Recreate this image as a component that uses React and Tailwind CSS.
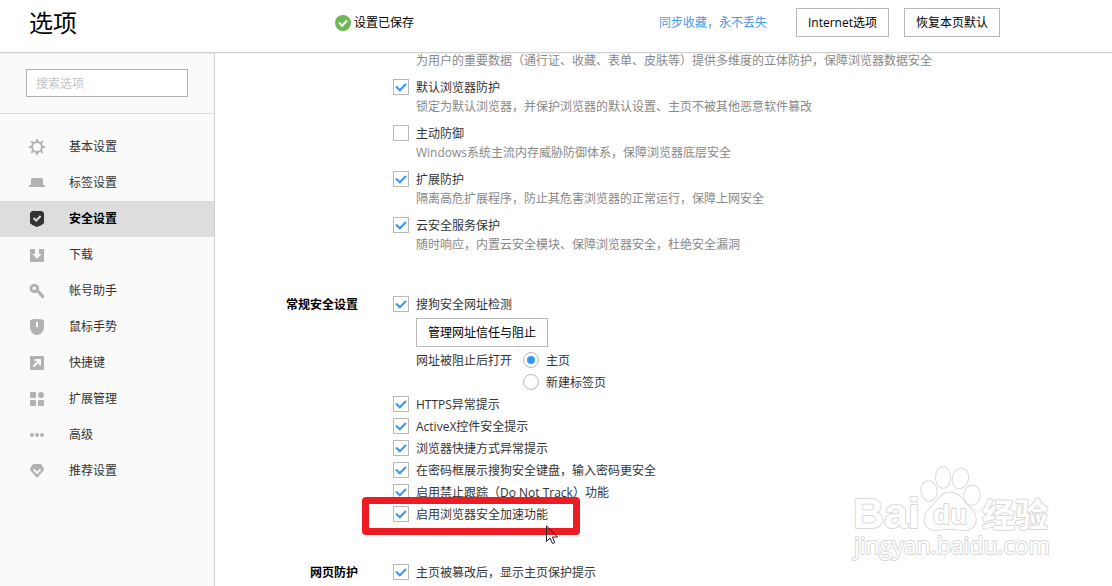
import React, { useState } from "react";

const navItems = [
  { id: "basic", label: "基本设置" },
  { id: "tabs", label: "标签设置" },
  { id: "security", label: "安全设置" },
  { id: "download", label: "下载" },
  { id: "account", label: "帐号助手" },
  { id: "gesture", label: "鼠标手势" },
  { id: "shortcut", label: "快捷键" },
  { id: "extension", label: "扩展管理" },
  { id: "advanced", label: "高级" },
  { id: "recommend", label: "推荐设置" },
];

const protections = [
  {
    id: "default-browser",
    title: "默认浏览器防护",
    desc: "锁定为默认浏览器，并保护浏览器的默认设置、主页不被其他恶意软件篡改",
    checked: true,
  },
  {
    id: "active-defense",
    title: "主动防御",
    desc: "Windows系统主流内存威胁防御体系，保障浏览器底层安全",
    checked: false,
  },
  {
    id: "extension-guard",
    title: "扩展防护",
    desc: "隔离高危扩展程序，防止其危害浏览器的正常运行，保障上网安全",
    checked: true,
  },
  {
    id: "cloud-guard",
    title: "云安全服务保护",
    desc: "随时响应，内置云安全模块、保障浏览器安全，杜绝安全漏洞",
    checked: true,
  },
];

const generalOptions = [
  { id: "https", title: "HTTPS异常提示" },
  { id: "activex", title: "ActiveX控件安全提示" },
  { id: "link", title: "浏览器快捷方式异常提示" },
  { id: "keyboard", title: "在密码框展示搜狗安全键盘，输入密码更安全" },
  { id: "dnt", title: "启用禁止跟踪（Do Not Track）功能" },
];

const NavIcon = ({ id }) => {
  switch (id) {
    case "basic":
      return (
        <g stroke="currentColor" fill="none">
          <circle cx="8" cy="8" r="5" strokeWidth="2" />
          <path
            d="M8 0v3M8 13v3M0 8h3M13 8h3M2.2 2.2l2.2 2.2M11.6 11.6l2.2 2.2M2.2 13.8l2.2-2.2M11.6 4.4l2.2-2.2"
            strokeWidth="2"
          />
        </g>
      );
    case "tabs":
      return <path d="M3 3h10l1 1v6h2v2H0v-2h2V4z" />;
    case "security":
      return (
        <>
          <path d="M3 0h10l2 2v9.500c0 1.700-4 3.300-7 4.500-3-1.200-7-2.800-7-4.500V2z" />
          <path d="M4.600 7l2.600 2.600L11.600 5" fill="none" stroke="#ddd" strokeWidth="2" />
        </>
      );
    case "download":
      return <path d="M1 2h5v5H3.500L8 12l4.500-5H10V2h5v13H1z" />;
    case "account":
      return (
        <path
          fillRule="evenodd"
          d="M5.500 .8a4.700 4.700 0 0 1 4.400 6.300L15 12.200V15h-3v-1.700h-1.700v-1.600L7.800 9.500A4.700 4.700 0 1 1 5.500 .8zM5.200 3.400a1.800 1.800 0 1 0 0 3.600 1.800 1.800 0 0 0 0-3.600z"
        />
      );
    case "gesture":
      return (
        <path
          fillRule="evenodd"
          d="M1 2c0-1.200 3-2 7-2s7 .8 7 2v6c0 4.500-3.500 8-7 8s-7-3.500-7-8zM7 3v5h2V3z"
        />
      );
    case "shortcut":
      return (
        <>
          <rect x="1" y="1" width="14" height="14" rx="1" />
          <path d="M4.500 11.500L10.500 5.500M5.500 5H11v5.500" fill="none" stroke="#fafafa" strokeWidth="2" />
        </>
      );
    case "extension":
      return (
        <>
          <rect x="1" y="1" width="6" height="6" rx="1" />
          <circle cx="12" cy="4" r="3" />
          <rect x="1" y="9" width="6" height="6" rx="1" />
          <rect x="9" y="9" width="6" height="6" rx="1" />
        </>
      );
    case "advanced":
      return (
        <>
          <circle cx="3" cy="8" r="2" />
          <circle cx="8" cy="8" r="2" />
          <circle cx="13" cy="8" r="2" />
        </>
      );
    default:
      return (
        <>
          <path d="M4 1h8l3 4.500v1.500L8 15 1 7V5.500z" />
          <path d="M4.500 6.500L8 10l3.500-3.500" fill="none" stroke="#fafafa" strokeWidth="1.800" />
        </>
      );
  }
};

const Checkbox = ({ id, defaultChecked = true }) => (
  <span className="relative block h-4 w-4 shrink-0">
    <input
      id={id}
      type="checkbox"
      defaultChecked={defaultChecked}
      className="peer block h-4 w-4 appearance-none border border-[#b8b8b8] bg-white"
    />
    <svg
      viewBox="0 0 16 16"
      className="pointer-events-none absolute inset-0 hidden h-4 w-4 peer-checked:block"
    >
      <path d="M3 7.500L6.800 11.300L13 5" fill="none" stroke="#3296fa" strokeWidth="2" />
    </svg>
  </span>
);

const CheckRow = ({ id, title, defaultChecked }) => (
  <div className="flex h-[22px] items-center gap-[7px]">
    <Checkbox id={id} defaultChecked={defaultChecked} />
    <label htmlFor={id} className="pt-0.5">
      {title}
    </label>
  </div>
);

const Radio = ({ id, label, value, onChange }) => (
  <div className="flex h-[22px] items-center gap-[7px]">
    <span className="relative block h-4 w-4 shrink-0">
      <input
        id={id}
        type="radio"
        name="blocked-page"
        checked={value === id}
        onChange={() => onChange(id)}
        className="peer block h-4 w-4 appearance-none rounded-full border border-[#b8b8b8] bg-white"
      />
      <span className="pointer-events-none absolute inset-1 hidden rounded-full bg-[#3296fa] peer-checked:block" />
    </span>
    <label htmlFor={id} className="pt-0.5">
      {label}
    </label>
  </div>
);

const Button = ({ children }) => (
  <button
    type="button"
    className="h-[29px] border border-[#b8b8b8] bg-white px-[11px] whitespace-nowrap text-black"
  >
    {children}
  </button>
);

const Section = ({ title, children }) => (
  <section className="flex gap-[35px]">
    <h2 className="w-[143px] shrink-0 text-right leading-6 font-bold text-black">
      {title}
    </h2>
    <div className="min-w-0 flex-1">{children}</div>
  </section>
);

const Watermark = () => (
  <svg
    viewBox="0 0 230 120"
    className="pointer-events-none absolute right-[42px] bottom-[11px] h-[120px] w-[230px]"
    fill="#fff"
    stroke="#d9d9d9"
    strokeWidth="2"
    strokeLinejoin="round"
    style={{ paintOrder: "stroke" }}
    fontFamily="'Liberation Sans', 'Noto Sans CJK SC', sans-serif"
    fontWeight="bold"
  >
    <text x="13" y="73" fontSize="43">Bai</text>
    <g transform="scale(0.3333)" strokeWidth="6">
      <ellipse cx="267" cy="108" rx="23" ry="29" transform="rotate(-8 267 108)" />
      <ellipse cx="309" cy="67" rx="21" ry="31" />
      <ellipse cx="361" cy="70" rx="23" ry="30" transform="rotate(14 361 70)" />
      <ellipse cx="396" cy="121" rx="23" ry="29" transform="rotate(8 396 121)" />
      <path d="M330 113c22 0 33 14 43 28 12 16 34 27 34 52 0 21-14 32-33 32-16 0-26-4-44-4s-28 4-44 4c-19 0-32-12-32-32 0-25 22-36 34-52 10-14 20-28 42-28z" />
    </g>
    <text x="93" y="69" fontSize="28">du</text>
    <text x="142" y="72" fontSize="33">经验</text>
    <text x="14" y="99" fontSize="23" fontFamily="'Open Sans', sans-serif" fontWeight="500">
      jingyan.baidu.com
    </text>
  </svg>
);

const App = () => {
  const [active, setActive] = useState("security");
  const [blockedPage, setBlockedPage] = useState("home");

  return (
    <div className="flex h-screen flex-col overflow-hidden bg-white font-['Open_Sans','Noto_Sans_CJK_SC',sans-serif] text-xs text-[#333]">
      <header className="z-10 flex h-[53px] shrink-0 items-center border-b border-[#d0d0d0] bg-white pr-28 pb-[7px] whitespace-nowrap shadow-2xs">
        <h1 className="w-[335px] pl-[29px] text-2xl text-black">选项</h1>
        <p className="flex items-center gap-[3px] text-black">
          <svg viewBox="0 0 16 16" className="h-4 w-4">
            <circle cx="8" cy="8" r="8" fill="#6cb852" />
            <path d="M4 7.500L7.200 10.700L12 5.500" fill="none" stroke="#fff" strokeWidth="2" />
          </svg>
          设置已保存
        </p>
        <a href="#sync" className="mr-[29px] ml-auto text-[#4a97e3]">
          同步收藏，永不丢失
        </a>
        <div className="flex gap-[15px]">
          <Button>Internet选项</Button>
          <Button>恢复本页默认</Button>
        </div>
      </header>

      <div className="flex min-h-0 flex-1">
        <aside className="w-[215px] shrink-0 border-r border-[#d0d0d0] bg-[#fafafa] shadow-2xs">
          <div className="border-b border-[#ddd] px-[26px] py-4">
            <input
              type="search"
              aria-label="搜索选项"
              placeholder="搜索选项"
              className="block h-7 w-full border border-[#b0b0b0] bg-white px-[9px] outline-none placeholder:text-[#c4c4c4]"
            />
          </div>
          <nav className="pt-[15px]">
            {navItems.map((item) => (
              <a
                key={item.id}
                href={`#${item.id}`}
                onClick={() => setActive(item.id)}
                className={`flex h-9 items-center gap-6 pl-[29px] ${
                  active === item.id ? "bg-[#ddd] font-bold text-black" : ""
                }`}
              >
                <svg
                  viewBox="0 0 16 16"
                  fill="currentColor"
                  className={`h-4 w-4 ${active === item.id ? "text-[#333]" : "text-[#b2b2b2]"}`}
                >
                  <NavIcon id={item.id} />
                </svg>
                {item.label}
              </a>
            ))}
          </nav>
        </aside>

        <main className="relative min-w-0 flex-1 overflow-hidden">
          <Section>
            <p className="pl-[23px] leading-4 text-[#888]">
              为用户的重要数据（通行证、收藏、表单、皮肤等）提供多维度的立体防护，保障浏览器数据安全
            </p>
            {protections.map((item) => (
              <div key={item.id} className="pt-[7px]">
                <CheckRow id={item.id} title={item.title} defaultChecked={item.checked} />
                <p className="mt-px pl-[23px] leading-4 text-[#888]">{item.desc}</p>
              </div>
            ))}
          </Section>

          <div className="mt-10">
            <Section title="常规安全设置">
              <CheckRow id="url-check" title="搜狗安全网址检测" />
              <div className="pl-[23px]">
                <div className="pt-[3px] pb-[2px]">
                  <Button>管理网址信任与阻止</Button>
                </div>
                <div className="flex gap-[11px]">
                  <span className="leading-6">网址被阻止后打开</span>
                  <div role="radiogroup" aria-label="网址被阻止后打开">
                    <Radio id="home" label="主页" value={blockedPage} onChange={setBlockedPage} />
                    <Radio id="newtab" label="新建标签页" value={blockedPage} onChange={setBlockedPage} />
                  </div>
                </div>
              </div>
              {generalOptions.map((item) => (
                <CheckRow key={item.id} id={item.id} title={item.title} />
              ))}
              <div className="relative">
                <CheckRow id="accelerate" title="启用浏览器安全加速功能" />
                <div className="pointer-events-none absolute -top-[6px] -bottom-[10px] -left-[31px] w-[218px] rounded border-[7px] border-[#ed1c24]" />
                <svg
                  viewBox="0 0 12 19"
                  className="pointer-events-none absolute top-[22px] left-[153px] h-[19px] w-3"
                >
                  <path
                    d="M.5 .8V16.500L4 13l2.500 5.500 2.300-1L6.400 12H11.500z"
                    fill="none"
                    stroke="#222"
                  />
                </svg>
              </div>
            </Section>
          </div>

          <div className="mt-9">
            <Section title="网页防护">
              <CheckRow id="homepage" title="主页被篡改后，显示主页保护提示" />
            </Section>
          </div>

          <Watermark />
        </main>
      </div>
    </div>
  );
};

export default App;
